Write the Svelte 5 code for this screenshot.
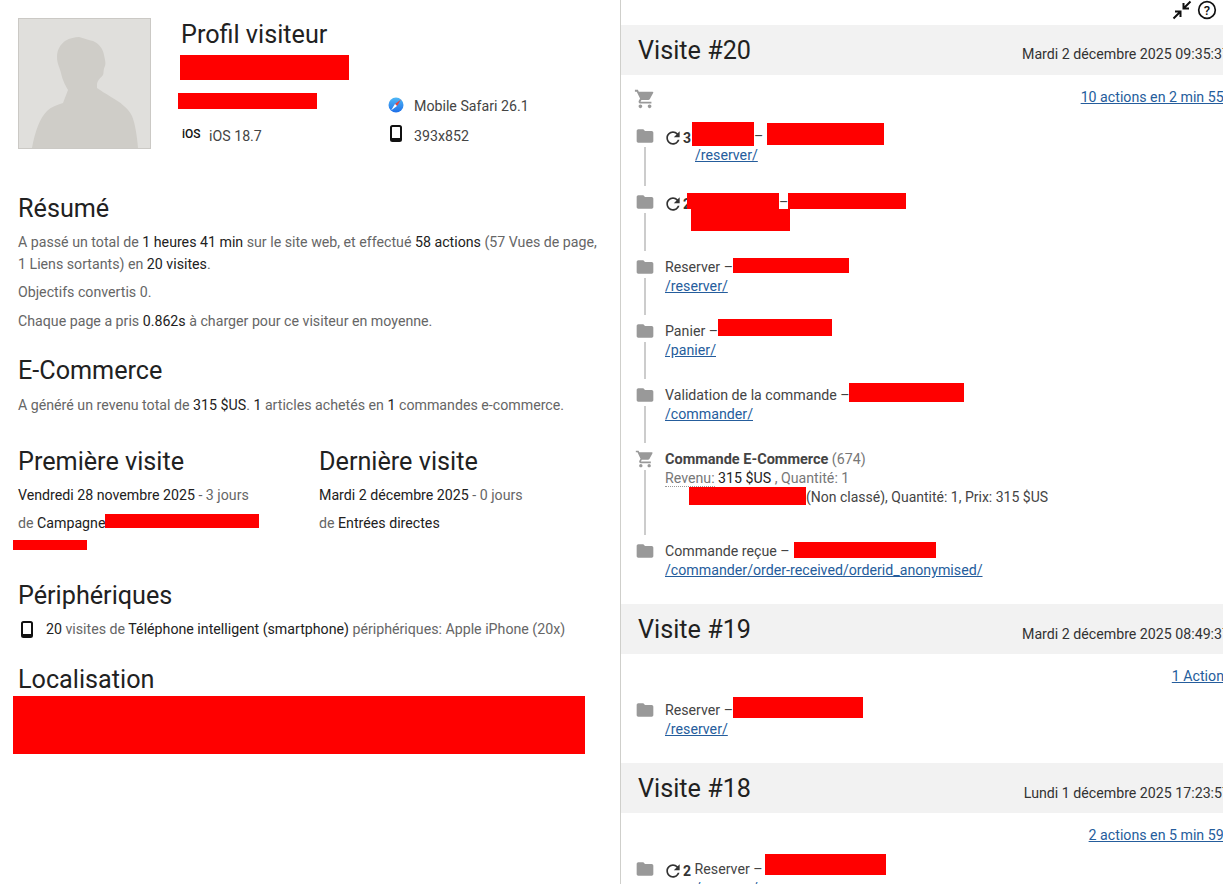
<script lang="ts">
	const folder = 'M10 4H4c-1.1 0-2 .9-2 2v12c0 1.1.9 2 2 2h16c1.1 0 2-.9 2-2V8c0-1.1-.9-2-2-2h-8l-2-2z';
	const cart =
		'M7 18c-1.1 0-1.99.9-1.99 2S5.9 22 7 22s2-.9 2-2-.9-2-2-2zM1 2v2h2l3.6 7.59-1.35 2.45c-.16.28-.25.61-.25.96 0 1.1.9 2 2 2h12v-2H7.42c-.14 0-.25-.11-.25-.25l.03-.12.9-1.63h7.45c.75 0 1.41-.41 1.75-1.03l3.58-6.49A1 1 0 0 0 20 4H5.21l-.94-2H1zm16 16c-1.1 0-1.99.9-1.99 2s.89 2 1.99 2 2-.9 2-2-.9-2-2-2z';
	const refresh =
		'M17.65 6.35C16.2 4.9 14.21 4 12 4c-4.42 0-7.99 3.58-7.99 8s3.57 8 7.99 8c3.73 0 6.84-2.55 7.73-6h-2.08c-.82 2.33-3.04 4-5.65 4-3.31 0-6-2.69-6-6s2.69-6 6-6c1.66 0 3.14.69 4.22 1.78L13 11h7V4l-2.35 2.35z';
</script>

{#snippet red(w: number, h: number, dy = 0, ml = 0)}
	<span class="red" style="width:{w}px;height:{h}px;margin-top:-{h}px;top:{dy}px;margin-left:{ml}px"></span>
{/snippet}

{#snippet phone()}
	<svg class="phone" viewBox="0 0 12 17" width="12" height="17">
		<rect x="1" y="1" width="10" height="15" rx="1.5" fill="none" stroke="#111" stroke-width="2" />
		<rect x="1" y="13" width="10" height="3" rx="1" fill="#111" />
	</svg>
{/snippet}

{#snippet icon(d: string, last = false)}
	<div class="rail">
		<svg viewBox="0 0 24 24" width="20" height="20" fill="#999"><path {d} /></svg>
		{#if !last}<span class="line"></span>{/if}
	</div>
{/snippet}

{#snippet redo(n: number)}
	<svg class="redo" viewBox="0 0 24 24" width="20" height="20" fill="#333"><path d={refresh} /></svg><b class="count">{n}</b>
{/snippet}

<div class="page">
	<main class="left">
		<header class="profile">
			<svg class="avatar" viewBox="0 0 133 131" width="133" height="131">
				<rect width="133" height="131" fill="#e0dfdc" />
				<path
					d="M14 130c3-17 8-30 15-37 4-4 10-6 16-8l5-13c-2-4-5-8-7-17-1-5-4-9-4-16 0-8 4-13 8-16 5-3 10-4 14-4 5 1 8 3 14 4 5 2 10 7 11 14 1 5 2 8 1 11-2 4-1 7-2 9-2 3-5 4-6 9l0 4c4 3 8 5 14 9 9 5 17 11 21 19 3 7 5 20 6 32z"
					fill="#cfcdc8"
				/>
				<rect x="0.5" y="0.5" width="132" height="130" fill="none" stroke="#cbc9c5" />
			</svg>
			<div class="profile-info">
				<h1>Profil visiteur</h1>
				<span class="red-block name"></span>
				<div class="facts">
					<div class="fact">{@render red(139, 16, 3, -3)}</div>
					<div class="fact">
						<svg class="fact-icon safari" viewBox="0 0 16 16" width="16" height="16">
							<defs>
								<linearGradient id="safari-blue" x1="0" y1="0" x2="0" y2="1">
									<stop offset="0" stop-color="#4fb8f6" />
									<stop offset="1" stop-color="#1f6fe8" />
								</linearGradient>
							</defs>
							<circle cx="8" cy="8" r="7.5" fill="url(#safari-blue)" />
							<path d="M13 2.5 7 7l2 2z" fill="#e8453c" />
							<path d="M3 13.5 7 7l2 2z" fill="#fff" />
						</svg>
						Mobile Safari 26.1
					</div>
					<div class="fact"><span class="ios">iOS</span>iOS 18.7</div>
					<div class="fact">
						<span class="fact-icon phone-slot">{@render phone()}</span>
						393x852
					</div>
				</div>
			</div>
		</header>

		<section class="resume">
			<h2>Résumé</h2>
			<p class="tall">
				A passé un total de <em>1 heures 41 min</em> sur le site web, et effectué <em>58 actions</em> (57 Vues de page,
				1 Liens sortants) en <em>20 visites</em>.
			</p>
			<p>Objectifs convertis 0.</p>
			<p>Chaque page a pris <em>0.862s</em> à charger pour ce visiteur en moyenne.</p>
		</section>

		<section class="ecommerce">
			<h2>E-Commerce</h2>
			<p>A généré un revenu total de <em>315 $US</em>. <em>1</em> articles achetés en <em>1</em> commandes e-commerce.</p>
		</section>

		<section class="visits">
			<div class="visit-col">
				<h2>Première visite</h2>
				<p><em>Vendredi 28 novembre 2025</em> - 3 jours</p>
				<p>de <em>Campagne</em>{@render red(154, 14, 0)}</p>
				<span class="red-block referrer"></span>
			</div>
			<div class="visit-col">
				<h2>Dernière visite</h2>
				<p><em>Mardi 2 décembre 2025</em> - 0 jours</p>
				<p>de <em>Entrées directes</em></p>
			</div>
		</section>

		<section class="devices">
			<h2>Périphériques</h2>
			<p class="device">
				{@render phone()}
				<span><em>20</em> visites de <em>Téléphone intelligent (smartphone)</em> périphériques: Apple iPhone (20x)</span>
			</p>
		</section>

		<section class="location">
			<h2>Localisation</h2>
			<span class="red-block place"></span>
		</section>
	</main>

	<aside class="right">
		<div class="toolbar">
			<svg viewBox="0 0 20 20" width="20" height="20" fill="none" stroke="#111" stroke-width="2">
				<path d="M1.5 18.5 8 12M3 11.5h5.5V17" />
				<path d="M18.5 1.5 12 8M17 8.5h-5.5V3" />
			</svg>
			<svg viewBox="0 0 20 20" width="20" height="20">
				<circle cx="10" cy="10" r="8.3" fill="none" stroke="#111" stroke-width="1.7" />
				<text x="10" y="14.5" text-anchor="middle" class="help">?</text>
			</svg>
		</div>

		<div class="band">
			<h2>Visite #20</h2>
			<time>Mardi 2 décembre 2025 09:35:37</time>
		</div>
		<div class="summary with-cart">
			<svg viewBox="0 0 24 24" width="22" height="22" fill="#999"><path d={cart} /></svg>
			<a href="#v20">10 actions en 2 min 55s</a>
		</div>
		<div class="actions first">
			<div class="row row-a">
				{@render icon(folder)}
				<div>
					<div>{@render redo(3)}{@render red(62, 24, 5, 1)}–{@render red(117, 22, 4, 4)}</div>
					<a class="indent" href="#r">/reserver/</a>
				</div>
			</div>
			<div class="row row-b">
				{@render icon(folder)}
				<div>
					<div>{@render redo(2)}{@render red(92, 16, 2, -4)}–{@render red(118, 16, 2, 0)}</div>
					<div class="indent">{@render red(99, 22, 5, -4)}</div>
				</div>
			</div>
			<div class="row">
				{@render icon(folder)}
				<div>
					<div>Reserver – {@render red(116, 15, 1, -4)}</div>
					<a href="#r">/reserver/</a>
				</div>
			</div>
			<div class="row">
				{@render icon(folder)}
				<div>
					<div>Panier – {@render red(114, 17, 0, -4)}</div>
					<a href="#p">/panier/</a>
				</div>
			</div>
			<div class="row">
				{@render icon(folder)}
				<div>
					<div>Validation de la commande – {@render red(115, 19, 2, -4)}</div>
					<a href="#c">/commander/</a>
				</div>
			</div>
			<div class="row row-order">
				{@render icon(cart)}
				<div>
					<div class="muted"><strong>Commande E-Commerce</strong> (674)</div>
					<div class="muted"><span class="dotted">Revenu:</span> <em>315 $US</em> , Quantité: 1</div>
					<div class="product">{@render red(117, 18, 3, 24)}(Non classé), Quantité: 1, Prix: 315 $US</div>
				</div>
			</div>
			<div class="row">
				{@render icon(folder, true)}
				<div>
					<div>Commande reçue – {@render red(142, 16, 2, 1)}</div>
					<a href="#o">/commander/order-received/orderid_anonymised/</a>
				</div>
			</div>
		</div>

		<div class="band later">
			<h2>Visite #19</h2>
			<time>Mardi 2 décembre 2025 08:49:37</time>
		</div>
		<div class="summary solo"><a href="#v19">1 Action</a></div>
		<div class="actions">
			<div class="row">
				{@render icon(folder, true)}
				<div>
					<div>Reserver – {@render red(130, 21, 3, -4)}</div>
					<a href="#r">/reserver/</a>
				</div>
			</div>
		</div>

		<div class="band later">
			<h2>Visite #18</h2>
			<time>Lundi 1 décembre 2025 17:23:57</time>
		</div>
		<div class="summary"><a href="#v18">2 actions en 5 min 59s</a></div>
		<div class="actions">
			<div class="row">
				{@render icon(folder)}
				<div>
					<div>{@render redo(2)} Reserver – {@render red(121, 21, 1, -1)}</div>
					<a class="indent" href="#r">/reserver/</a>
				</div>
			</div>
		</div>
	</aside>
</div>

<style>
	:global(body) {
		margin: 0;
		background: #fff;
	}

	.page {
		display: flex;
		height: 884px;
		overflow: hidden;
		font-family: Roboto, sans-serif;
		font-size: 14.2px;
		line-height: 19px;
		color: #444;
	}

	h1,
	h2 {
		margin: 0;
		font-weight: 400;
		font-size: 25.2px;
		line-height: 30px;
		color: #212121;
	}

	p {
		margin: 0;
	}

	em {
		font-style: normal;
		color: #212121;
	}

	a {
		color: #255d9c;
		text-decoration: underline;
	}

	.red {
		display: inline-block;
		position: relative;
		background: #f00;
		vertical-align: baseline;
	}

	.red-block {
		display: block;
		background: #f00;
	}

	.left {
		width: 620px;
		flex: none;
		box-sizing: border-box;
		padding: 18px 0 0 18px;
		color: #666;
	}

	.profile {
		display: flex;
		gap: 30px;
		height: 131px;
	}

	.avatar {
		flex: none;
	}

	.profile h1 {
		margin-top: 2px;
	}

	.profile-info {
		flex: 1;
		color: #444;
	}

	.name {
		width: 169px;
		height: 25px;
		margin: 5px 0 0 -1px;
	}

	.facts {
		display: grid;
		grid-template-columns: 208px 1fr;
		grid-auto-rows: 30px;
		margin-top: 11px;
	}

	.fact {
		display: flex;
		align-items: center;
	}

	.fact-icon {
		display: flex;
		justify-content: center;
		width: 16px;
		margin-right: 9px;
		margin-top: -2px;
	}

	.safari {
		margin-left: -1px;
		margin-right: 10px;
	}

	.phone-slot {
		margin-left: -1px;
		margin-right: 10px;
		margin-top: -5px;
	}

	.ios {
		width: 28px;
		font-size: 12px;
		font-weight: 500;
		color: #111;
		margin-top: -3px;
		padding-left: 1px;
		box-sizing: border-box;
	}

	.phone {
		display: block;
		flex: none;
	}

	.resume {
		margin-top: 45px;
	}

	.resume p {
		margin-bottom: 10px;
	}

	.resume .tall {
		line-height: 22px;
		margin-top: 7px;
		margin-bottom: 8px;
		width: 585px;
	}

	.ecommerce {
		margin-top: 25px;
	}

	.ecommerce p {
		margin-top: 10px;
	}

	.visits {
		display: grid;
		grid-template-columns: 301px 1fr;
		margin-top: 32px;
	}

	.visit-col p {
		line-height: 28px;
	}

	.visit-col h2 + p {
		margin-top: 4px;
	}

	.referrer {
		width: 74px;
		height: 10px;
		margin: 3px 0 0 -5px;
	}

	.devices {
		margin-top: 31px;
	}

	.device {
		display: flex;
		align-items: center;
		gap: 13px;
		margin: 9px 0 0 3px;
	}

	.location {
		margin-top: 26px;
	}

	.place {
		width: 572px;
		height: 58px;
		margin: 1px 0 0 -5px;
	}

	.right {
		flex: 1;
		min-width: 0;
		overflow: hidden;
		border-left: 1px solid #cfcfcb;
		color: #444;
	}

	.toolbar {
		display: flex;
		justify-content: flex-end;
		gap: 5px;
		height: 25px;
		padding-right: 6px;
	}

	.band {
		display: flex;
		justify-content: space-between;
		align-items: center;
		height: 50px;
		padding: 0 0 0 17px;
		margin-right: -7px;
		background: #f2f2f2;
		white-space: nowrap;
	}

	.band h2 {
		margin-top: 1px;
	}

	.band time {
		color: #333;
		margin-top: 8px;
	}

	.band.later time {
		margin-top: 10px;
	}

	.summary {
		display: flex;
		justify-content: flex-end;
		height: 22px;
		margin-top: 13px;
		margin-right: -8px;
		white-space: nowrap;
	}

	.solo {
		margin-right: -1px;
	}

	.with-cart {
		justify-content: space-between;
		padding-left: 13px;
	}

	.actions {
		padding: 12px 0 0 14px;
		margin-bottom: 24px;
		white-space: nowrap;
	}

	.actions.first {
		padding-top: 17px;
	}

	.row {
		display: flex;
		gap: 10px;
		height: 64px;
	}

	.row:last-child {
		height: auto;
	}

	.row-a {
		height: 66px;
	}

	.row-b {
		height: 65px;
	}

	.row-order {
		height: 92px;
	}

	.rail {
		display: flex;
		flex-direction: column;
		align-items: center;
		width: 20px;
		height: 100%;
		flex: none;
		margin-top: -1px;
	}

	.rail svg {
		flex: none;
	}

	.line {
		width: 2px;
		flex: 1;
		margin: 1px 0 6px;
		background: #ccc;
	}

	.redo {
		vertical-align: -5px;
		margin: -4px 0 -2px -2px;
	}

	.count {
		position: relative;
		top: 2px;
		font-weight: 700;
		font-size: 14px;
		color: #333;
	}

	.indent {
		margin-left: 30px;
	}

	.muted {
		color: #777;
	}

	strong {
		font-weight: 700;
		font-size: 14.5px;
		color: #444;
	}

	.dotted {
		border-bottom: 1px dotted #999;
	}

	.product {
		font-size: 14px;
		color: #444;
	}

	.help {
		font-family: Roboto, sans-serif;
		font-size: 13px;
		font-weight: 500;
		fill: #111;
	}
</style>
